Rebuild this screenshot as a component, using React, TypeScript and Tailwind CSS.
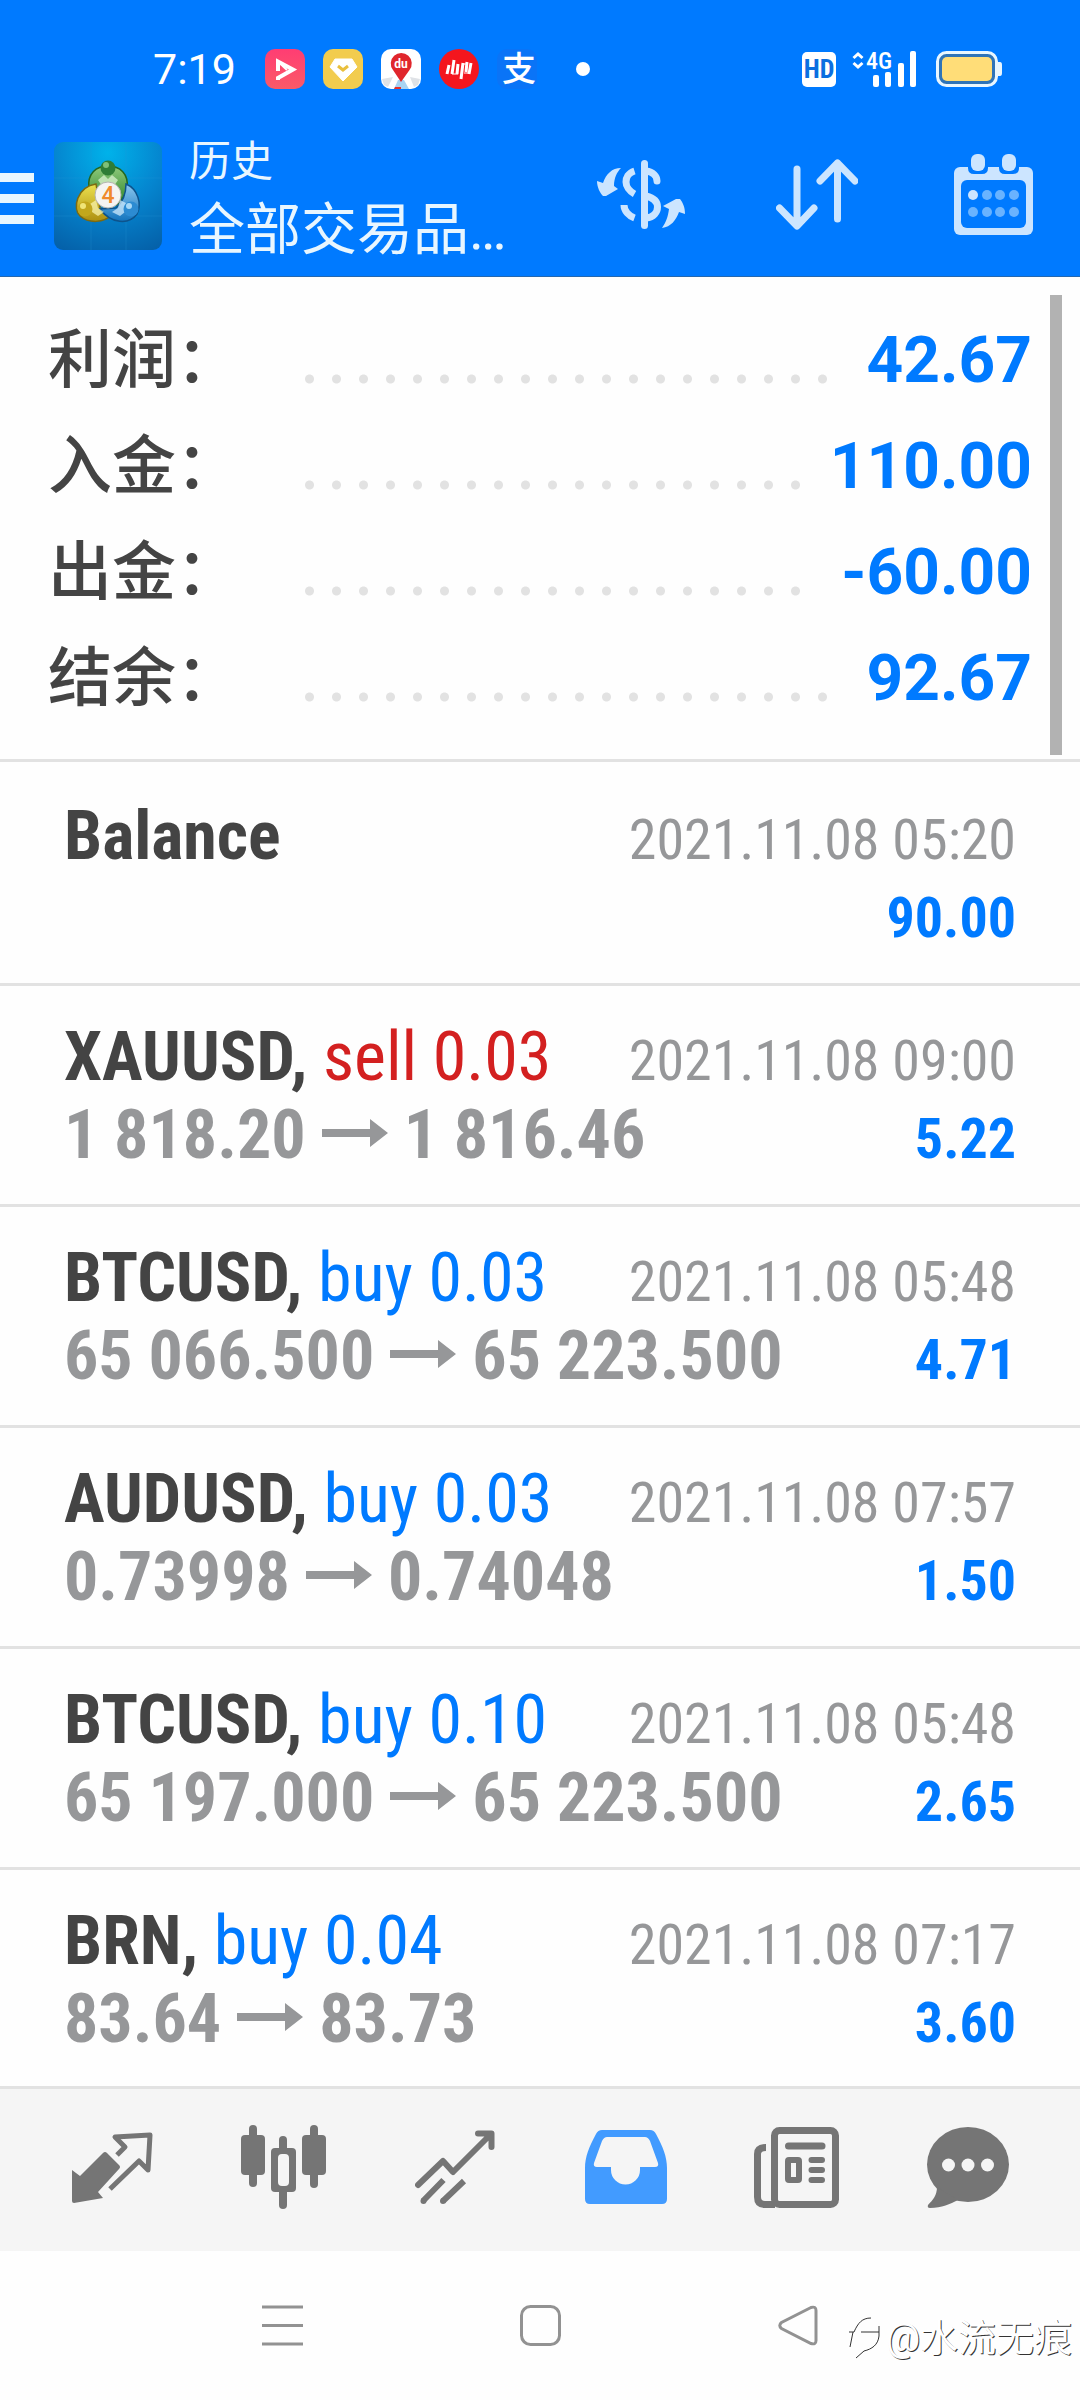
import type { ReactNode } from "react";

const summary = [
  { label: "利润：", value: "42.67" },
  { label: "入金：", value: "110.00" },
  { label: "出金：", value: "-60.00" },
  { label: "结余：", value: "92.67" },
];

type Deal = {
  symbol: string;
  side?: "buy" | "sell";
  volume?: string;
  open?: string;
  close?: string;
  time: string;
  profit: string;
};

const deals: Deal[] = [
  { symbol: "Balance", time: "2021.11.08 05:20", profit: "90.00" },
  { symbol: "XAUUSD", side: "sell", volume: "0.03", open: "1 818.20", close: "1 816.46", time: "2021.11.08 09:00", profit: "5.22" },
  { symbol: "BTCUSD", side: "buy", volume: "0.03", open: "65 066.500", close: "65 223.500", time: "2021.11.08 05:48", profit: "4.71" },
  { symbol: "AUDUSD", side: "buy", volume: "0.03", open: "0.73998", close: "0.74048", time: "2021.11.08 07:57", profit: "1.50" },
  { symbol: "BTCUSD", side: "buy", volume: "0.10", open: "65 197.000", close: "65 223.500", time: "2021.11.08 05:48", profit: "2.65" },
  { symbol: "BRN", side: "buy", volume: "0.04", open: "83.64", close: "83.73", time: "2021.11.08 07:17", profit: "3.60" },
];

const StatusBar = () => (
  <div className="flex items-center pt-[49px] pb-[27px] pl-[153px] pr-[78px] text-white">
    <span className="w-[112px] text-[43px] leading-10">7:19</span>
    <div className="flex items-center gap-[18px]">
      <svg width="40" height="40" viewBox="0 0 40 40">
        <defs>
          <linearGradient id="pink" x1="0" y1="0" x2="0" y2="1">
            <stop offset="0" stopColor="#ff3d73" />
            <stop offset="1" stopColor="#fb5a68" />
          </linearGradient>
        </defs>
        <rect width="40" height="40" rx="10" fill="url(#pink)" />
        <path d="M13 22V12.500L28 20.500 13 29V31" fill="none" stroke="#fff" strokeWidth="4" />
        <path d="M13 12.500 22 21" fill="none" stroke="#fff" strokeWidth="2" />
      </svg>
      <svg width="40" height="40" viewBox="0 0 40 40">
        <rect width="40" height="40" rx="10" fill="#f2cc4e" />
        <path d="M12 10H29L34 18 20 32 7 18Z" fill="#fff" stroke="#fff" strokeWidth="1" strokeLinejoin="round" />
        <path d="M15 17 20 21 25 17" fill="none" stroke="#e9bf3c" strokeWidth="3" />
      </svg>
      <svg width="40" height="40" viewBox="0 0 40 40">
        <rect width="40" height="40" rx="10" fill="#fff" />
        <path d="M1 30 12 28 7 38 3 36ZM39 30 29 28 33 38 37 36Z" fill="#dfe2e6" />
        <path d="M17 31H23L28 40H13Z" fill="#a9d3f2" />
        <path d="M14 38H20V40H13Z" fill="#e5322f" />
        <path d="M20 33 12 21A10.500 10.500 0 1 1 28.500 21Z" fill="#e0262c" />
        <text x="20" y="19" textAnchor="middle" fontSize="12" fontWeight="700" fill="#fff">du</text>
      </svg>
      <svg width="40" height="40" viewBox="0 0 40 40">
        <circle cx="20" cy="20" r="20" fill="#f4161e" />
        <path d="M10 16 8 25M15 11 13 25M19 15 18 25M24 14 22 30M28 13 27 23M32 14 30 25" fill="none" stroke="#fff" strokeWidth="3" />
        <path d="M13 25H19M23 15H29M25 24H31" fill="none" stroke="#fff" strokeWidth="1" />
      </svg>
      <svg className="overflow-visible" width="40" height="40" viewBox="0 0 40 40">
        <rect width="40" height="40" rx="10" fill="#0a74f7" />
        <text x="22" y="32" textAnchor="middle" fontSize="34" fontWeight="500" fill="#fff">支</text>
      </svg>
    </div>
    <span className="ml-[39px] size-[14px] rounded-full bg-white" />
    <span className="ml-auto flex h-[35px] w-[34px] items-center justify-center rounded-[5px] bg-white font-['Roboto_Condensed','Liberation_Sans_Narrow','Roboto',sans-serif] text-[26px] font-bold text-[#0b6fe0]">
      HD
    </span>
    <svg className="ml-4 overflow-visible" width="66" height="36" viewBox="0 0 66 36">
      <path d="M1.500 7 6 3 10.500 7M1.500 12 6 16 10.500 12" fill="none" stroke="#fff" strokeWidth="3" />
      <text className="font-['Roboto_Condensed','Liberation_Sans_Narrow','Roboto',sans-serif]" x="14" y="18" fontSize="24" fontWeight="500" fill="#fff">4G</text>
      <g fill="#fff">
        <rect x="21" y="24" width="6" height="12" rx="2" />
        <rect x="33" y="21" width="6" height="15" rx="2" />
        <rect x="46" y="12" width="6" height="24" rx="2" />
        <rect x="58" y="0" width="6" height="36" rx="2" />
      </g>
    </svg>
    <svg className="ml-[18px]" width="66" height="36" viewBox="0 0 66 36">
      <rect x="1.500" y="1.500" width="59" height="33" rx="9" fill="#2f74b8" stroke="#e8f6ff" strokeWidth="3" />
      <rect x="6" y="6" width="50" height="24" rx="5" fill="#ffdd78" />
      <path d="M62 11H64Q66 11 66 14V22Q66 25 64 25H62Z" fill="#e8f6ff" />
    </svg>
  </div>
);

const AppLogo = () => (
  <svg className="ml-5 shrink-0" width="108" height="108" viewBox="0 0 108 108">
    <defs>
      <radialGradient id="sky" cx="0.5" cy="0.1" r="1">
        <stop offset="0" stopColor="#00b2ea" />
        <stop offset="0.5" stopColor="#0585cf" />
        <stop offset="1" stopColor="#0560a8" />
      </radialGradient>
      <linearGradient id="green" x1="0" y1="0" x2="0" y2="1">
        <stop offset="0" stopColor="#8fca7c" />
        <stop offset="1" stopColor="#2b8228" />
      </linearGradient>
      <linearGradient id="yellow" x1="0" y1="0" x2="0" y2="1">
        <stop offset="0" stopColor="#ece14f" />
        <stop offset="1" stopColor="#ad8f10" />
      </linearGradient>
      <linearGradient id="blue" x1="0" y1="0" x2="0" y2="1">
        <stop offset="0" stopColor="#8cc8ef" />
        <stop offset="1" stopColor="#1273bd" />
      </linearGradient>
    </defs>
    <rect width="108" height="108" rx="9" fill="url(#sky)" />
    <path d="M37 0V108M72 0V108M0 36H108M0 74H108" stroke="#2b9bdc" strokeOpacity="0.25" />
    <path d="M35 46C33 32 42 24 54 24S75 32 73 46C72 53 67 60 62 63L48 50Z" fill="url(#green)" stroke="#24661f" strokeWidth="1.500" />
    <path d="M42 42C23 45 18 66 26 74C34 81 50 82 58 72L46 66Z" fill="url(#yellow)" stroke="#7d6a10" strokeWidth="1.500" />
    <path d="M72 42C84 47 88 62 83 72C75 83 57 82 46 67L62 66C69 60 72 52 72 42Z" fill="url(#blue)" stroke="#0d538c" strokeWidth="1.500" />
    <path d="M44 38 50 33 54 37 58 33 64 38 60 44H48Z" fill="#d5efc8" fillOpacity="0.8" />
    <path d="M36 62 42 58 44 66 50 70 44 74 38 70Z" fill="#fbf6b5" fillOpacity="0.7" />
    <path d="M72 61 66 58 64 66 58 70 66 74 71 70Z" fill="#d7efff" fillOpacity="0.7" />
    <circle cx="54" cy="26" r="7.500" fill="#2f7d36" />
    <circle cx="52" cy="23" r="3" fill="#7fbf78" />
    <circle cx="31" cy="67" r="7.500" fill="#c2a71c" />
    <circle cx="29" cy="64" r="3" fill="#f0e578" />
    <circle cx="77" cy="67" r="7.500" fill="#2c8bd2" />
    <circle cx="75" cy="64" r="3" fill="#a6d8f7" />
    <circle cx="54" cy="53" r="13" fill="#f5f4f2" stroke="#b5b5b0" />
    <text x="54" y="61" textAnchor="middle" fontSize="23" fontWeight="500" fill="#f08a2c">4</text>
  </svg>
);

const Toolbar = () => (
  <div className="flex items-center py-[26px] pr-[43px] text-[#cce5ff]">
    <button aria-label="Menu" className="mt-1 flex w-[34px] shrink-0 flex-col gap-3">
      <span className="h-[9px] bg-[#e8f6ff]" />
      <span className="h-[9px] bg-[#e8f6ff]" />
      <span className="h-[9px] bg-[#e8f6ff]" />
    </button>
    <AppLogo />
    <div className="-my-[14px] ml-[27px] grow text-[#e8f6ff]">
      <div className="text-[42px] leading-[68px]">历史</div>
      <h1 className="text-[56px] leading-[68px] whitespace-nowrap">全部交易品…</h1>
    </div>
    <div className="mb-1 flex gap-[88px]">
      <button aria-label="Symbols" className="flex h-[81px] w-[88px] items-center justify-center">
        <svg width="88" height="69" viewBox="0 0 88 69" fill="none" stroke="currentColor" strokeWidth="7">
          <path d="M47.500 3.500V65.500" strokeLinecap="round" />
          <path d="M37.500 11C31 13 29 18 29 22S32 31 37.500 34M27 45C27 51 32 56 37.500 58" />
          <path d="M49 11C56 12 60 16 60 21" strokeLinecap="round" />
          <path d="M49 36C57 38 60.500 42 60.500 47S57 57 49 58" />
          <path stroke="none" fill="currentColor" d="M24 8C15 8 9 14 6 23L0 21C0 27 3 33 6 36H9L21 29 17 26C17 18 20 12 24 8Z" />
          <path stroke="none" fill="currentColor" d="M65 68C74 67 79 60 82 52L88 54C88 47 86 43 83 39H79L66 46 72 49C71 57 69 62 65 68Z" />
        </svg>
      </button>
      <button aria-label="Sort" className="flex h-[81px] w-[88px] items-center justify-center">
        <svg width="82" height="71" viewBox="0 0 82 71" fill="none" stroke="currentColor" strokeWidth="7" strokeLinecap="round" strokeLinejoin="round">
          <path d="M21 10V66M3.500 49 21 67 38 49M61.500 60V4M44 22 61.500 4 79 22" />
        </svg>
      </button>
      <button aria-label="Period" className="flex h-[81px] w-[88px] items-center justify-center">
        <svg width="79" height="81" viewBox="0 0 79 81" fill="currentColor">
          <rect y="13" width="79" height="68" rx="6" />
          <rect x="7" y="26" width="65" height="48" rx="6" fill="#007aff" />
          <path d="M14 10V14Q14 20 20 20H28Q34 20 34 14V10ZM45 10V14Q45 20 51 20H59Q65 20 65 14V10Z" fill="#007aff" />
          <rect x="17" width="14" height="17" rx="6" />
          <rect x="48" width="14" height="17" rx="6" />
          <circle cx="19" cy="41" r="5" />
          <g fill="#69b3ff">
            <circle cx="33" cy="41" r="5" />
            <circle cx="46" cy="41" r="5" />
            <circle cx="60" cy="41" r="5" />
            <circle cx="19" cy="58" r="5" />
            <circle cx="33" cy="58" r="5" />
            <circle cx="46" cy="58" r="5" />
            <circle cx="60" cy="58" r="5" />
          </g>
        </svg>
      </button>
    </div>
  </div>
);

const Summary = () => (
  <section className="flex border-b-[3px] border-[#e2e2e2] pt-[18px] pr-[18px] pb-1">
    <dl className="grow pt-[13px] pb-[23px] pl-[48px] pr-[18px]">
      {summary.map((row) => (
        <div key={row.label} className="flex h-[106px] items-center">
          <dt className="w-[248px] shrink-0 text-[64px] leading-[106px] font-medium whitespace-nowrap text-[#444444]">{row.label}</dt>
          <dd className="flex grow items-center gap-7 text-[64px] leading-[106px] font-bold text-[#007aff]">
            <span className="mt-[36px] h-[10px] grow bg-[radial-gradient(circle_at_center,#e2e2e2_4px,transparent_5px)] bg-[length:27px_10px] bg-repeat-x" />
            {row.value}
          </dd>
        </div>
      ))}
    </dl>
    <div className="w-3 bg-[#b2b2b2]" />
  </section>
);

const DealRow = ({ deal }: { deal: Deal }) => (
  <li className="border-b-[3px] border-[#e2e2e2] px-16 pt-8 pb-[30px] font-['Roboto_Condensed','Liberation_Sans_Narrow','Roboto',sans-serif] text-[68px] leading-[78px] whitespace-nowrap last:pb-7">
    <div className="flex h-[78px] items-baseline justify-between">
      <div className="text-[#444444]">
        <b className="font-bold">{deal.side ? deal.symbol + "," : deal.symbol}</b>
        {deal.side && (
          <span className={deal.side === "sell" ? "text-[#d32020]" : "text-[#007aff]"}>
            {" "}{deal.side} {deal.volume}
          </span>
        )}
      </div>
      <time className="text-[56px] text-[#969799]">{deal.time}</time>
    </div>
    <div className="flex h-[78px] items-baseline justify-between font-bold">
      {deal.open ? (
        <div className="flex items-baseline gap-4 text-[#969799]">
          {deal.open}
          <svg width="66" height="39" viewBox="0 0 66 39" fill="currentColor">
            <path d="M0 10H48V0L66 14 48 28V18H0Z" />
          </svg>
          {deal.close}
        </div>
      ) : (
        <div>&nbsp;</div>
      )}
      <span className="text-[56px] text-[#007aff]">{deal.profit}</span>
    </div>
  </li>
);

const Tab = ({ label, active, children }: { label: string; active?: boolean; children: ReactNode }) => (
  <button aria-label={label} className={active ? "flex flex-1 items-center justify-center text-[#429bff]" : "flex flex-1 items-center justify-center text-[#757575]"}>
    {children}
  </button>
);

const TabBar = () => (
  <nav className="flex h-[162px] bg-[#f5f5f5] px-[27px] pb-[6px]">
    <Tab label="Quotes">
      <svg width="81" height="71" viewBox="0 0 81 71" fill="currentColor">
        <path d="M0 38 8 44 31 21Q33 19 35 21L47 33Q49 35 47 37L26 60 31 66 2 71Q0 71 0 69Z" />
        <path d="M45 23 53 15 43 5 78 3 76 38 67 29 38 57" fill="none" stroke="currentColor" strokeWidth="5" strokeLinejoin="round" />
      </svg>
    </Tab>
    <Tab label="Charts">
      <svg width="85" height="84" viewBox="0 0 85 84" fill="currentColor">
        <rect y="10" width="24" height="40" rx="4" />
        <rect x="8" width="8" height="62" rx="4" />
        <rect x="30" y="23" width="25" height="44" rx="4" />
        <rect x="38" y="11" width="8" height="73" rx="4" />
        <rect x="37" y="29" width="11" height="32" rx="4" fill="#f5f5f5" />
        <rect x="61" y="10" width="24" height="40" rx="4" />
        <rect x="69" width="8" height="63" rx="4" />
      </svg>
    </Tab>
    <Tab label="Trade">
      <svg width="80" height="74" viewBox="0 0 80 74" fill="none" stroke="currentColor" strokeWidth="6">
        <path d="M3 55 28 31 38 42 75 5M63 3.500H76.500V17" strokeLinecap="round" strokeLinejoin="round" />
        <path d="M28.500 50 8 71M49 51 28 71" />
        <g fill="currentColor" stroke="none">
          <circle cx="8.500" cy="71" r="3" />
          <circle cx="28" cy="71" r="3" />
        </g>
      </svg>
    </Tab>
    <Tab label="History" active>
      <svg width="82" height="74" viewBox="0 0 82 74" fill="currentColor" fillRule="evenodd">
        <path d="M17 0H65Q69 0 71 4C78 17 82 27 82 38V69Q82 74 77 74H5Q0 74 0 69V38C0 27 4 17 11 4Q13 0 17 0ZM22 7Q19 7 17 11L9 33Q8 37 12 37H26V40A14.500 14.500 0 0 0 55 40V37H70Q74 37 73 33L65 11Q63 7 60 7Z" />
      </svg>
    </Tab>
    <Tab label="News">
      <svg width="85" height="81" viewBox="0 0 85 81" fill="none" stroke="currentColor" strokeWidth="7">
        <rect x="20.500" y="3.500" width="61" height="74" rx="5" />
        <path d="M12 20.500C7 20.500 3.500 22 3.500 27V70Q3.500 77.500 11 77.500H21" />
        <path d="M34.500 19H68" strokeLinecap="round" />
        <rect x="34" y="33" width="11" height="20" rx="1" strokeWidth="6" />
        <path d="M57.500 33H68M57.500 43H68M57.500 53H68" strokeWidth="6" strokeLinecap="round" />
      </svg>
    </Tab>
    <Tab label="Chat">
      <svg width="82" height="81" viewBox="0 0 82 81" fill="currentColor">
        <ellipse cx="41" cy="37.500" rx="41" ry="37.500" />
        <path d="M10 60C10 68 6 73 1 78Q0 81 3 81C15 81 23 77 31 73Z" />
        <g fill="#f5f5f5">
          <circle cx="21.500" cy="38" r="6.500" />
          <circle cx="41" cy="38" r="6.500" />
          <circle cx="60.500" cy="38" r="6.500" />
        </g>
      </svg>
    </Tab>
  </nav>
);

const SystemNav = () => (
  <div className="relative flex justify-center gap-[217px] py-[54px] text-[#929292]">
    <button aria-label="Recent apps">
      <svg width="41" height="41" viewBox="0 0 41 41" stroke="currentColor" strokeWidth="3">
        <path d="M0 2H41M0 20.500H41M0 39H41" />
      </svg>
    </button>
    <button aria-label="Home">
      <svg width="41" height="41" viewBox="0 0 41 41" fill="none" stroke="currentColor" strokeWidth="3">
        <rect x="1.500" y="1.500" width="38" height="38" rx="9" />
      </svg>
    </button>
    <button aria-label="Back">
      <svg width="41" height="41" viewBox="0 0 41 41" fill="none" stroke="currentColor" strokeWidth="3">
        <path d="M33 2.500 3.500 17.500Q0 20.500 3.500 23.500L33 38.500Q38 40 38 35.500V5.500Q38 1 33 2.500Z" />
      </svg>
    </button>
    <div className="absolute right-2 bottom-[37px] flex items-center gap-1 text-[38px] leading-[50px] text-white [text-shadow:1px_1px_0_#333333]">
      <svg width="34" height="42" viewBox="0 0 34 42" fill="none" stroke="#333333" strokeWidth="1">
        <path d="M1 15H6C10 6 14 1 23 1M5 15 2 30M13 15H31M31 9V19C30 28 24 32 16 34L8 41" />
      </svg>
      @水流无痕
    </div>
  </div>
);

export default function App() {
  return (
    <div className="flex min-h-screen flex-col bg-[#fefefe] font-['Roboto','Noto_Sans_CJK_SC',sans-serif]">
      <header className="border-b border-[#2468b0] bg-[#007aff]">
        <StatusBar />
        <Toolbar />
      </header>
      <main className="grow">
        <Summary />
        <ul className="pt-[3px]">
          {deals.map((deal, i) => (
            <DealRow key={i} deal={deal} />
          ))}
        </ul>
      </main>
      <TabBar />
      <SystemNav />
    </div>
  );
}
